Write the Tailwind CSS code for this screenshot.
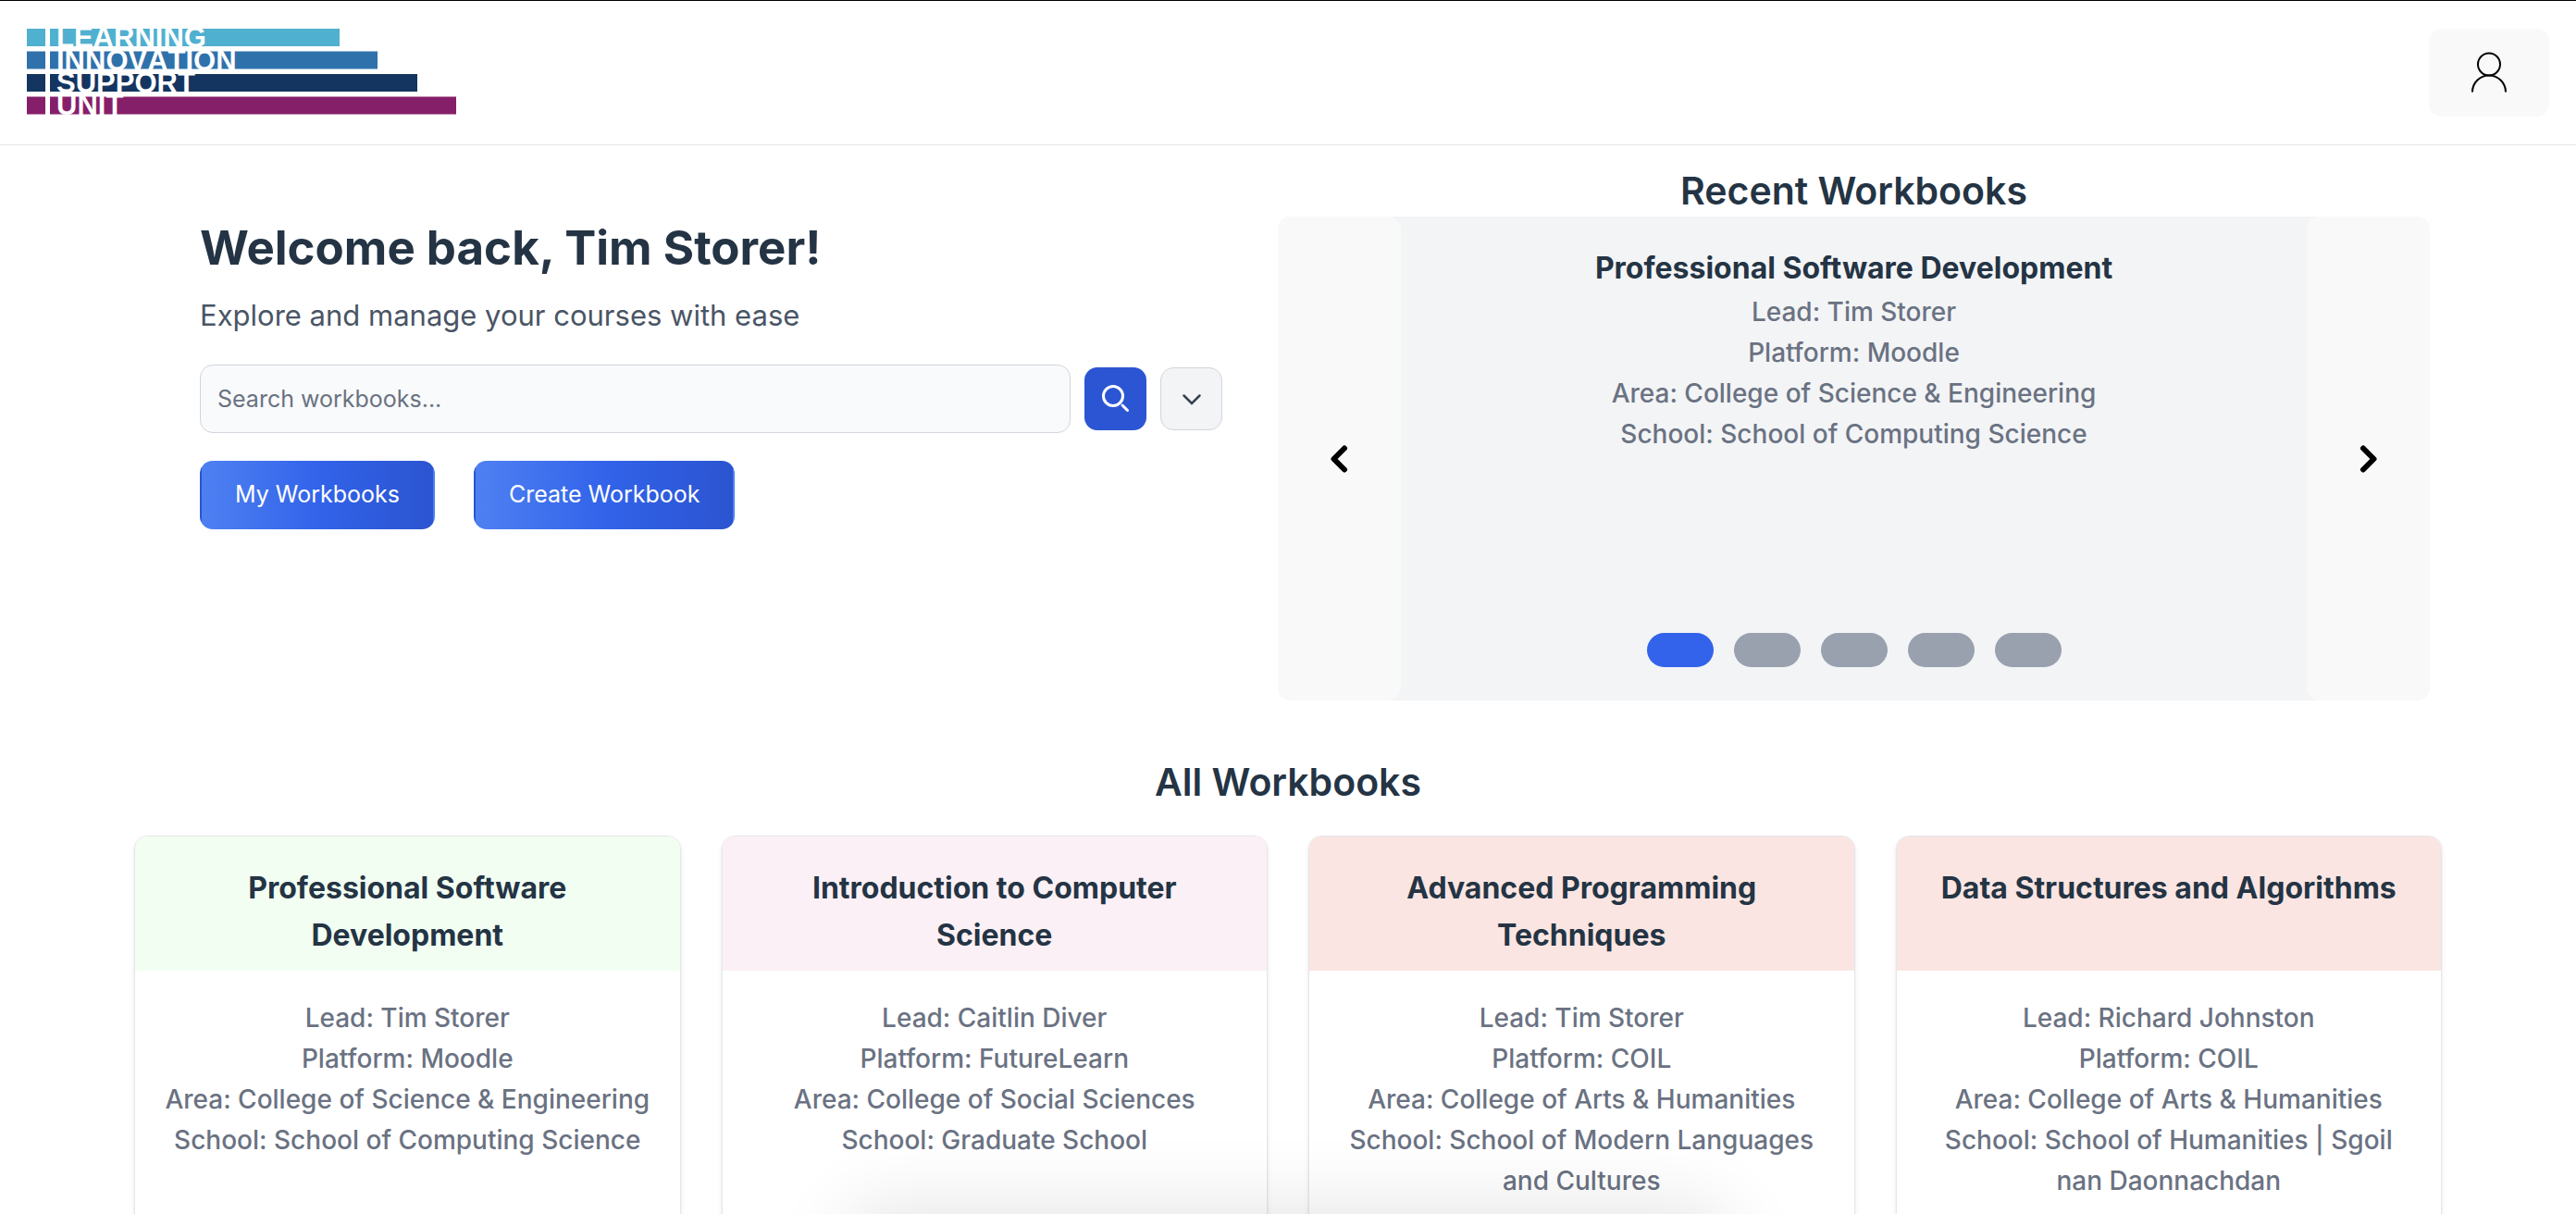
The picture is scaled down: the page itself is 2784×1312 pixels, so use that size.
<!DOCTYPE html>
<html lang="en">
<head>
<meta charset="utf-8">
<meta name="viewport" content="width=device-width, initial-scale=1">
<title>Workbooks</title>
<script src="https://cdn.jsdelivr.net/npm/@tailwindcss/browser@4"></script>
</head>
<body class="relative h-screen overflow-hidden bg-white font-['Inter',sans-serif] text-[#243444]">
<header class="flex items-start justify-between border-t border-b border-t-black border-b-gray-200 px-[29px] py-[30px]">
  <a href="#" aria-label="Learning Innovation Support Unit">
    <svg class="block h-[94px] w-[465px] overflow-visible [font-kerning:none]" viewBox="0 0 465 94" font-family="Liberation Sans, Arial, sans-serif" font-weight="700" font-size="31">
      <path fill="#50b0cf" d="M0 0h20v19H0zM25 0h313v19H25z"/>
      <path fill="#2f71ab" d="M0 24.500h20v19H0zM25 24.500h354v19H25z"/>
      <path fill="#14355f" d="M0 49h20v19H0zM25 49h397v19H25z"/>
      <path fill="#861f69" d="M0 73.500h20v19H0zM25 73.500h439v19H25z"/>
      <g fill="#fff">
        <text x="32" y="20">LEARNING</text>
        <text x="32" y="45">INNOVATION</text>
        <text x="32" y="69">SUPPORT</text>
        <text x="32" y="93">UNIT</text>
      </g>
    </svg>
  </a>
  <button type="button" aria-label="Account" class="flex h-[95px] w-[130px] items-center justify-center rounded-[14px] bg-[#f9f9f9]">
    <svg class="size-12" viewBox="0 0 48 48" fill="none" stroke="#000" stroke-width="2"><circle cx="24" cy="14.500" r="12"/><path d="M6 44.500a18 18 0 0 1 36 0"/></svg>
  </button>
</header>

<main>
  <section class="grid grid-cols-[1105fr_1245fr] gap-[60px] pt-[22px] pr-[158px] pl-[216px]">
    <div class="pt-[57px]">
      <h1 class="text-[51px] leading-[64px] font-bold">Welcome back, Tim Storer!</h1>
      <p class="mt-[17px] text-[31px] leading-[48px] text-gray-600">Explore and manage your courses with ease</p>
      <form class="mt-[29px] flex items-center gap-[15px]">
        <input type="text" aria-label="Search workbooks" placeholder="Search workbooks..." class="h-[74px] min-w-0 flex-1 rounded-[14px] border border-gray-300 bg-gray-50 px-[18px] text-[25px] placeholder:text-gray-500">
        <button type="submit" aria-label="Search" class="flex h-[68px] w-[67px] items-center justify-center rounded-[14px] bg-[#2b55d3]">
          <svg class="size-8" viewBox="0 0 32 32" fill="none" stroke="#fff" stroke-width="3" stroke-linecap="round"><circle cx="13" cy="13" r="10.500"/><path d="M23 23l5.500 5.500"/></svg>
        </button>
        <button type="button" aria-label="Search options" class="flex h-[68px] w-[67px] items-center justify-center rounded-[14px] border border-gray-300 bg-gray-100">
          <svg class="size-8" viewBox="0 0 32 32" fill="none" stroke="#374151" stroke-width="2.500" stroke-linecap="round"><path d="M7.500 12.500l8.500 8.500l8.500-8.500"/></svg>
        </button>
      </form>
      <div class="mt-[30px] flex gap-[42px]">
        <button type="button" class="h-[74px] rounded-[14px] border-2 border-transparent bg-linear-to-r from-[#4f80f2] via-[#3263ea] to-[#2b54d0] px-9 text-[25px] text-white">My Workbooks</button>
        <button type="button" class="h-[74px] rounded-[14px] border-2 border-transparent bg-linear-to-r from-[#4f80f2] via-[#3263ea] to-[#2b54d0] px-9 text-[25px] text-white">Create Workbook</button>
      </div>
    </div>

    <div>
      <h2 class="text-center text-[41px] leading-[55px] font-semibold">Recent Workbooks</h2>
      <div class="flex h-[523px] rounded-[14px] bg-gray-100">
        <button type="button" aria-label="Previous" class="flex w-[133px] items-center justify-center rounded-[14px] bg-[#f9f9f9]">
          <svg class="size-9" viewBox="0 0 36 36" fill="none" stroke="#000" stroke-width="6" stroke-linecap="round" stroke-linejoin="round"><path d="M23 6.500L11.500 18L23 29.500"/></svg>
        </button>
        <div class="flex flex-1 flex-col items-center justify-between pt-[30px] pb-9 text-center">
          <div>
            <h3 class="text-[32px] leading-[51px] font-bold">Professional Software Development</h3>
            <div class="text-[28px] leading-[44px] font-medium text-gray-500">
              <p>Lead: Tim Storer</p><p>Platform: Moodle</p><p>Area: College of Science &amp; Engineering</p><p>School: School of Computing Science</p>
            </div>
          </div>
          <div class="flex gap-[22px]">
            <button type="button" aria-label="Slide 1" class="h-[37px] w-[72px] rounded-full bg-[#3263ea]"></button>
            <button type="button" aria-label="Slide 2" class="h-[37px] w-[72px] rounded-full bg-gray-400"></button>
            <button type="button" aria-label="Slide 3" class="h-[37px] w-[72px] rounded-full bg-gray-400"></button>
            <button type="button" aria-label="Slide 4" class="h-[37px] w-[72px] rounded-full bg-gray-400"></button>
            <button type="button" aria-label="Slide 5" class="h-[37px] w-[72px] rounded-full bg-gray-400"></button>
          </div>
        </div>
        <button type="button" aria-label="Next" class="flex w-[133px] items-center justify-center rounded-[14px] bg-[#f9f9f9]">
          <svg class="size-9" viewBox="0 0 36 36" fill="none" stroke="#000" stroke-width="6" stroke-linecap="round" stroke-linejoin="round"><path d="M12 6.500L23.500 18L12 29.500"/></svg>
        </button>
      </div>
    </div>
  </section>

  <section class="px-[145px] pt-[61px]">
    <h2 class="text-center text-[41px] leading-[55px] font-semibold">All Workbooks</h2>
    <div class="mt-[30px] grid grid-cols-4 gap-11 text-center">
      <article class="min-h-[520px] overflow-hidden rounded-[14px] border border-gray-200 bg-white shadow-md">
        <h3 class="min-h-[145px] bg-[#f2fef2] px-10 pt-[30px] text-[32px] leading-[51px] font-bold">Professional Software Development</h3>
        <div class="px-7 pt-[29px] text-[28px] leading-[44px] font-medium text-gray-500">
          <p>Lead: Tim Storer</p><p>Platform: Moodle</p><p>Area: College of Science &amp; Engineering</p><p>School: School of Computing Science</p>
        </div>
      </article>
      <article class="min-h-[520px] overflow-hidden rounded-[14px] border border-gray-200 bg-white shadow-md">
        <h3 class="min-h-[145px] bg-[#fbf0f5] px-10 pt-[30px] text-[32px] leading-[51px] font-bold">Introduction to Computer Science</h3>
        <div class="px-7 pt-[29px] text-[28px] leading-[44px] font-medium text-gray-500">
          <p>Lead: Caitlin Diver</p><p>Platform: FutureLearn</p><p>Area: College of Social Sciences</p><p>School: Graduate School</p>
        </div>
      </article>
      <article class="min-h-[520px] overflow-hidden rounded-[14px] border border-gray-200 bg-white shadow-md">
        <h3 class="min-h-[145px] bg-[#fae5e2] px-10 pt-[30px] text-[32px] leading-[51px] font-bold">Advanced Programming Techniques</h3>
        <div class="px-7 pt-[29px] text-[28px] leading-[44px] font-medium text-gray-500">
          <p>Lead: Tim Storer</p><p>Platform: COIL</p><p>Area: College of Arts &amp; Humanities</p><p>School: School of Modern Languages and Cultures</p>
        </div>
      </article>
      <article class="min-h-[520px] overflow-hidden rounded-[14px] border border-gray-200 bg-white shadow-md">
        <h3 class="min-h-[145px] bg-[#fae5e2] px-10 pt-[30px] text-[32px] leading-[51px] font-bold">Data Structures and Algorithms</h3>
        <div class="px-7 pt-[29px] text-[28px] leading-[44px] font-medium text-gray-500">
          <p>Lead: Richard Johnston</p><p>Platform: COIL</p><p>Area: College of Arts &amp; Humanities</p><p>School: School of Humanities | Sgoil nan Daonnachdan</p>
        </div>
      </article>
    </div>
  </section>
</main>
<!-- soft shade rising from the bottom edge -->
<div aria-hidden="true" class="pointer-events-none absolute inset-x-[33%] top-full h-20 rounded-[40px] shadow-[0_0_80px_10px_rgba(0,0,0,0.1)]"></div>
</body>
</html>
